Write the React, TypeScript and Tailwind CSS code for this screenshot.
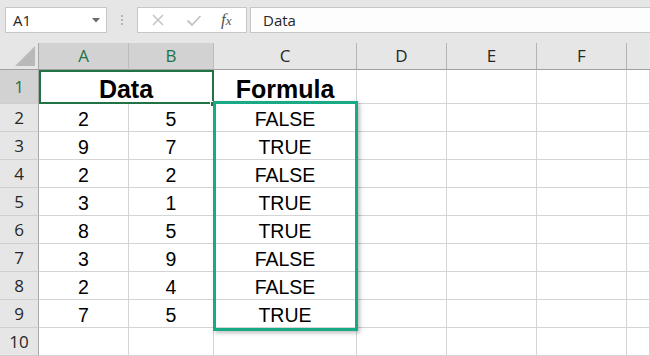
import React from "react";

const rowsData: [string, string, string][] = [
  ["2", "5", "FALSE"],
  ["9", "7", "TRUE"],
  ["2", "2", "FALSE"],
  ["3", "1", "TRUE"],
  ["8", "5", "TRUE"],
  ["3", "9", "FALSE"],
  ["2", "4", "FALSE"],
  ["7", "5", "TRUE"],
  ["", "", ""],
];

const cellBase =
  "border-r border-b border-[#d4d4d4] bg-white flex items-center justify-center text-[19.5px] text-black";
const headFont = { fontFamily: '"Open Sans", "Noto Sans", sans-serif' };
const cellFont = { fontFamily: '"Liberation Sans", Arial, sans-serif' };

function ColHead({ label, sel, last }: { label: string; sel?: boolean; last?: boolean }) {
  return (
    <div
      className={`flex items-center justify-center text-[17px] border-b border-[#a0a0a0] ${
        last ? "" : "border-r"
      } ${sel ? "bg-[#d2d2d2] text-[#217346] border-r-[#bdbdbd]" : "bg-[#e6e6e6] text-[#262626] border-r-[#b4b4b4]"}`}
      style={headFont}
    >
      {label}
    </div>
  );
}

function RowHead({ n, sel }: { n: number; sel?: boolean }) {
  return (
    <div
      className={`flex items-center justify-center text-[17px] border-r border-b border-r-[#a8a8a8] border-b-[#cfcfcf] ${
        sel ? "bg-[#d2d2d2] text-[#217346]" : "bg-[#e6e6e6] text-[#262626]"
      }`}
      style={headFont}
    >
      {n}
    </div>
  );
}

export default function App() {
  return (
    <div className="w-[650px] h-[356px] overflow-hidden bg-[#e6e6e6] flex flex-col">
      {/* Toolbar */}
      <div className="h-[43px] flex items-start pt-[7px] shrink-0">
        <div
          className="ml-[5px] w-[102px] h-[26px] bg-white border border-[#c6c6c6] flex items-center justify-between pl-[7px] pr-[6px] text-[15px] text-[#262626]"
          style={headFont}
        >
          <span>A1</span>
          <svg width="8" height="5" viewBox="0 0 8 5">
            <path d="M0 0 L8 0 L4 4.5 Z" fill="#6b6b6b" />
          </svg>
        </div>
        <div className="w-[30px] h-[26px] flex flex-col items-center justify-center gap-[2px]">
          <div className="w-[2px] h-[2px] bg-[#b3b3b3]" />
          <div className="w-[2px] h-[2px] bg-[#b3b3b3]" />
          <div className="w-[2px] h-[2px] bg-[#b3b3b3]" />
        </div>
        <div className="w-[110px] h-[26px] bg-white border border-[#c6c6c6] flex items-center pl-[13px]">
          <svg width="14" height="14" viewBox="0 0 14 14">
            <path d="M2 2 L12 12 M12 2 L2 12" stroke="#c4c4c4" strokeWidth="1.5" />
          </svg>
          <svg width="16" height="14" viewBox="0 0 16 14" className="ml-[21px]">
            <path d="M1.5 7.5 L6 12 L14.5 3" stroke="#c4c4c4" strokeWidth="1.8" fill="none" />
          </svg>
          <span
            className="ml-[19px] italic text-[17px] text-[#555]"
            style={{ fontFamily: '"Liberation Serif", "Times New Roman", serif' }}
          >
            f<span className="text-[13px]">x</span>
          </span>
        </div>
        <div
          className="ml-[3px] flex-1 h-[26px] bg-[#fdfdfd] border border-r-0 border-[#c6c6c6] flex items-center pl-[12px] text-[15px] text-[#262626]"
          style={headFont}
        >
          Data
        </div>
      </div>

      {/* Sheet */}
      <div
        className="relative grid flex-1"
        style={{
          gridTemplateColumns: "39px 90px 85px 143px 90px 90px 90px 1fr",
          gridTemplateRows: "27px 34px repeat(9, 28px)",
        }}
      >
        {/* header row */}
        <div className="relative bg-[#e6e6e6] border-r border-b border-r-[#a8a8a8] border-b-[#a0a0a0]">
          <svg className="absolute right-[3px] bottom-[3px]" width="20" height="20" viewBox="0 0 20 20">
            <path d="M20 0 L20 20 L0 20 Z" fill="#b9b9b9" />
          </svg>
        </div>
        <ColHead label="A" sel />
        <ColHead label="B" sel />
        <ColHead label="C" />
        <ColHead label="D" />
        <ColHead label="E" />
        <ColHead label="F" />
        <ColHead label="" last />

        {/* row 1 */}
        <RowHead n={1} sel />
        <div className={`${cellBase} col-span-2 font-bold text-[25px] pt-[6px]`} style={cellFont}>
          Data
        </div>
        <div className={`${cellBase} font-bold text-[25px] pt-[6px]`} style={cellFont}>
          Formula
        </div>
        <div className={cellBase} />
        <div className={cellBase} />
        <div className={cellBase} />
        <div className={cellBase} />

        {rowsData.map((r, i) => (
          <React.Fragment key={i}>
            <RowHead n={i + 2} />
            <div className={`${cellBase} pt-[4px]`} style={cellFont}>
              {r[0]}
            </div>
            <div className={`${cellBase} pt-[4px]`} style={cellFont}>
              {r[1]}
            </div>
            <div className={`${cellBase} pt-[4px]`} style={cellFont}>
              {r[2]}
            </div>
            <div className={cellBase} />
            <div className={cellBase} />
            <div className={cellBase} />
            <div className={cellBase} />
          </React.Fragment>
        ))}

        {/* selection A1:B1 */}
        <div className="absolute left-[39px] top-[27px] w-[175px] h-[34px] border-2 border-[#217346] pointer-events-none" />
        <div className="absolute left-[210px] top-[58px] w-[6px] h-[6px] bg-[#217346] border border-white" />
        {/* highlighted range C2:C9 */}
        <div className="absolute left-[213px] top-[58px] w-[145px] h-[230px] border-[3px] border-[#17aa85] shadow-[2px_2px_4px_rgba(0,0,0,0.25)] pointer-events-none" />
      </div>
    </div>
  );
}
